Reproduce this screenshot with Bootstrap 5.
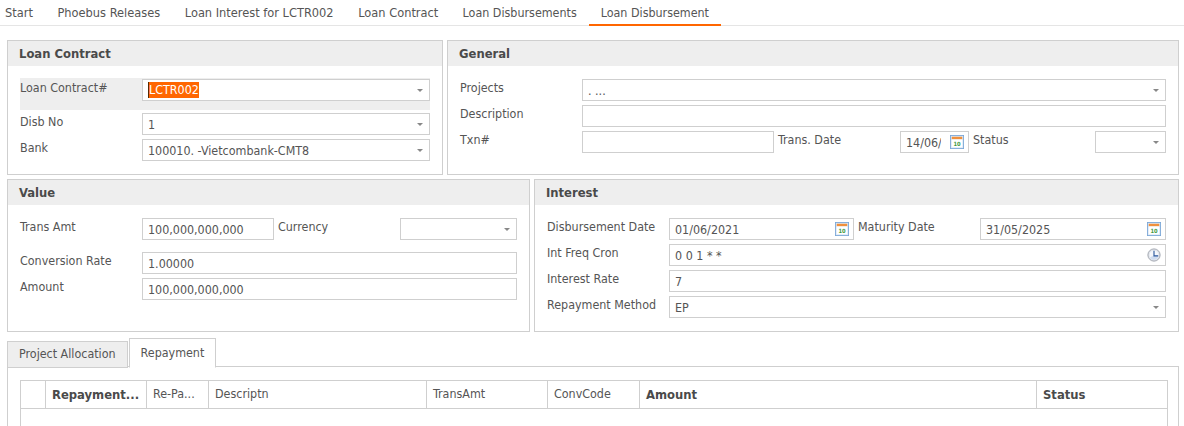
<!DOCTYPE html>
<html lang="en">
<head>
    <meta charset="UTF-8">
    <title>Loan Disbursement</title>
    <link href="https://cdn.jsdelivr.net/npm/bootstrap@5.3.0/dist/css/bootstrap.min.css" rel="stylesheet">
    <style>
        html, body { height: 426px; overflow: hidden; }
        body {
            background: #fff;
            color: #555;
            font-family: "DejaVu Sans Condensed", "DejaVu Sans", sans-serif;
            font-size: 12.4px;
        }
        /* top tabs */
        .top-tabs { height: 26px; border-bottom: 1px solid #e5e5e5; margin-bottom: 14px; padding-left: 5px; }
        .top-tabs .nav-link {
            color: #555; font-size: 12.7px; padding: 0 12.3px; height: 26px; line-height: 25px;
            border-bottom: 2px solid transparent;
        }
        .top-tabs .nav-item:first-child .nav-link { padding-left: 0; }
        .top-tabs .nav-link.tight-tab { font-size: 12.4px; padding: 0 12px; }
        .top-tabs .nav-link.active { border-bottom-color: #ff6600; }

        .page-wrap { padding: 0 5px 0 7px; }
        .panel-row { display: flex; gap: 4px; margin-bottom: 4px; }
        .panel-row.last { margin-bottom: 6px; }
        .panel-a { width: 436px; height: 135px; }
        .panel-b { flex: 1; height: 135px; }
        .panel-c { width: 523px; height: 153px; }
        .panel-d { flex: 1; height: 153px; }
        .panel-box { border: 1px solid #cfcfcf; border-radius: 0; color: #555; }
        .panel-box .card-header {
            background: #eee; border: 0; border-radius: 0; height: 25px; padding: 0 11px;
            line-height: 25px; font-weight: 700; font-size: 12.9px; color: #4a4a4a;
        }
        .panel-box .card-body { padding: 12px 12px 0; }

        /* form rows */
        .fld-row { display: flex; height: 22px; margin-bottom: 4px; }
        .fld-row.hilite { background: #eee; height: 32px; margin-bottom: 3px; padding-top: 1px; align-items: flex-start; }
        .fld-row.tall { margin-bottom: 12px; }
        .fld-row.first-row { margin-top: 1px; }
        .fld-label { flex: none; width: 122px; padding: 1px 0 0; line-height: 16px; color: #555; white-space: nowrap; }
        .fld-label.fld-gap { margin-left: 4px; }
        .fld-box { position: relative; flex: 1; min-width: 0; height: 22px; }
        .fld-box.w-132 { flex: none; width: 132px; }
        .fld-box.w-192 { flex: none; width: 192px; }
        .fld-box.w-69 { flex: none; width: 69px; }
        .fld-box.w-71 { flex: none; width: 71px; }
        .fld-box.w-117 { flex: none; width: 117px; }
        .fld-box.w-185 { flex: none; width: 185px; }
        .fld-box.w-186 { flex: none; width: 186px; }
        .fld-box .form-control, .fake-input {
            display: block; width: 100%; height: 22px; min-height: 0; border: 1px solid #cfcfcf; border-radius: 0;
            padding: 1px 5px; font-size: 12.4px; line-height: 16px; color: #555; background: #fff; box-shadow: none;
        }
        .fake-input { padding: 2px 5px 0; }
        .fld-box.with-ic .form-control { padding-right: 27px; }
        .fake-input .sel-text { background: #ff6600; color: #fff; border-left: 1px solid #5a2a00; display: inline-block; height: 16px; }
        .caret-ic {
            position: absolute; right: 7px; top: 10px; width: 0; height: 0;
            border-left: 3px solid transparent; border-right: 3px solid transparent; border-top: 3px solid #888;
        }
        .ic-over { position: absolute; right: 5px; top: 4px; width: 14px; height: 14px; display: block; }
        .ic-text { font-family: "DejaVu Sans Condensed", sans-serif; font-size: 6.5px; font-weight: 700; fill: #3f9a3f; }

        /* lower tabs */
        .sub-tabs { border-bottom: 1px solid #cfcfcf; height: 29px; align-items: flex-end; }
        .sub-tabs .nav-link {
            color: #555; font-size: 12.4px; background: #eee; border: 1px solid #cfcfcf; border-radius: 0;
            padding: 0 11px; height: 27px; line-height: 23px; margin: 0 1px -1px 0;
        }
        .sub-tabs .nav-link.active { background: #fff; height: 30px; line-height: 28px; border-bottom-color: #fff; margin-right: 0; }
        .sub-pane { border: 1px solid #cfcfcf; border-top: 0; border-bottom: 0; padding: 13px 12px 0; height: 59px; overflow: hidden; }
        .grid-tbl { table-layout: fixed; width: 1147px; margin: 0; border-collapse: collapse; }
        .grid-tbl th {
            border: 1px solid #cfcfcf; height: 28px; padding: 0 6px; font-weight: 400; font-size: 12.4px;
            color: #555; white-space: nowrap; overflow: hidden; vertical-align: middle; background: #fff;
        }
        .grid-tbl th.strong { font-weight: 700; font-size: 12.9px; color: #4a4a4a; }
        .grid-tbl td { border: 1px solid #cfcfcf; border-top: 0; border-bottom: 0; height: 18px; padding: 0; }
    </style>
</head>
<body>
    <ul class="nav top-tabs">
        <li class="nav-item"><a class="nav-link" href="#">Start</a></li>
        <li class="nav-item"><a class="nav-link" href="#">Phoebus Releases</a></li>
        <li class="nav-item"><a class="nav-link" href="#">Loan Interest for LCTR002</a></li>
        <li class="nav-item"><a class="nav-link" href="#">Loan Contract</a></li>
        <li class="nav-item"><a class="nav-link tight-tab" href="#">Loan Disbursements</a></li>
        <li class="nav-item"><a class="nav-link tight-tab active" href="#">Loan Disbursement</a></li>
    </ul>

    <div class="page-wrap">
        <div class="panel-row">
            <div class="card panel-box panel-a">
                <div class="card-header">Loan Contract</div>
                <div class="card-body">
                    <div class="fld-row hilite">
                        <div class="fld-label">Loan Contract#</div>
                        <div class="fld-box"><div class="fake-input"><span class="sel-text">LCTR002</span></div><span class="caret-ic"></span></div>
                    </div>
                    <div class="fld-row">
                        <div class="fld-label">Disb No</div>
                        <div class="fld-box"><input class="form-control" value="1"><span class="caret-ic"></span></div>
                    </div>
                    <div class="fld-row">
                        <div class="fld-label">Bank</div>
                        <div class="fld-box"><input class="form-control" value="100010. -Vietcombank-CMT8"><span class="caret-ic"></span></div>
                    </div>
                </div>
            </div>
            <div class="card panel-box panel-b">
                <div class="card-header">General</div>
                <div class="card-body">
                    <div class="fld-row first-row">
                        <div class="fld-label">Projects</div>
                        <div class="fld-box"><input class="form-control" value=". ..."><span class="caret-ic"></span></div>
                    </div>
                    <div class="fld-row">
                        <div class="fld-label">Description</div>
                        <div class="fld-box"><input class="form-control"></div>
                    </div>
                    <div class="fld-row">
                        <div class="fld-label">Txn#</div>
                        <div class="fld-box w-192"><input class="form-control"></div>
                        <div class="fld-label fld-gap">Trans. Date</div>
                        <div class="fld-box w-69 with-ic"><input class="form-control" value="14/06/2021">
                            <svg class="ic-over" viewBox="0 0 16 16"><use href="#ic-cal"/></svg></div>
                        <div class="fld-label fld-gap">Status</div>
                        <div class="fld-box w-71"><input class="form-control"><span class="caret-ic"></span></div>
                    </div>
                </div>
            </div>
        </div>

        <div class="panel-row last">
            <div class="card panel-box panel-c">
                <div class="card-header">Value</div>
                <div class="card-body">
                    <div class="fld-row tall first-row">
                        <div class="fld-label">Trans Amt</div>
                        <div class="fld-box w-132"><input class="form-control" value="100,000,000,000"></div>
                        <div class="fld-label fld-gap">Currency</div>
                        <div class="fld-box w-117"><input class="form-control"><span class="caret-ic"></span></div>
                    </div>
                    <div class="fld-row">
                        <div class="fld-label">Conversion Rate</div>
                        <div class="fld-box"><input class="form-control" value="1.00000"></div>
                    </div>
                    <div class="fld-row">
                        <div class="fld-label">Amount</div>
                        <div class="fld-box"><input class="form-control" value="100,000,000,000"></div>
                    </div>
                </div>
            </div>
            <div class="card panel-box panel-d">
                <div class="card-header">Interest</div>
                <div class="card-body">
                    <div class="fld-row first-row">
                        <div class="fld-label">Disbursement Date</div>
                        <div class="fld-box w-185 with-ic"><input class="form-control" value="01/06/2021">
                            <svg class="ic-over" viewBox="0 0 16 16"><use href="#ic-cal"/></svg></div>
                        <div class="fld-label fld-gap">Maturity Date</div>
                        <div class="fld-box w-186 with-ic"><input class="form-control" value="31/05/2025">
                            <svg class="ic-over" viewBox="0 0 16 16"><use href="#ic-cal"/></svg></div>
                    </div>
                    <div class="fld-row">
                        <div class="fld-label">Int Freq Cron</div>
                        <div class="fld-box with-ic"><input class="form-control" value="0 0 1 * *">
                            <svg class="ic-over" viewBox="0 0 16 16">
                                <circle cx="8" cy="8" r="7" fill="#dfe3ea" stroke="#9a9fa8"/>
                                <circle cx="8" cy="8" r="5.2" fill="#f5f7fb"/>
                                <path d="M8 8.5H13A5 5 0 0 1 3.5 10.5L8 8.5Z" fill="#cfdcf0"/>
                                <path d="M8 3.2V9H12.8" fill="none" stroke="#2f5a9e" stroke-width="1.3"/>
                            </svg></div>
                    </div>
                    <div class="fld-row">
                        <div class="fld-label">Interest Rate</div>
                        <div class="fld-box"><input class="form-control" value="7"></div>
                    </div>
                    <div class="fld-row">
                        <div class="fld-label">Repayment Method</div>
                        <div class="fld-box"><input class="form-control" value="EP"><span class="caret-ic"></span></div>
                    </div>
                </div>
            </div>
        </div>

        <ul class="nav sub-tabs">
            <li class="nav-item"><a class="nav-link" href="#">Project Allocation</a></li>
            <li class="nav-item"><a class="nav-link active" href="#">Repayment</a></li>
        </ul>
        <div class="sub-pane">
            <table class="grid-tbl">
                <colgroup>
                    <col style="width:25px"><col style="width:101px"><col style="width:62px"><col style="width:218px">
                    <col style="width:121px"><col style="width:92px"><col style="width:397px"><col style="width:131px">
                </colgroup>
                <thead>
                    <tr>
                        <th></th>
                        <th class="strong">Repayment...</th>
                        <th>Re-Pa...</th>
                        <th>Descriptn</th>
                        <th>TransAmt</th>
                        <th>ConvCode</th>
                        <th class="strong">Amount</th>
                        <th class="strong">Status</th>
                    </tr>
                </thead>
                <tbody><tr><td colspan="8"></td></tr></tbody>
            </table>
        </div>
    </div>

    <svg width="0" height="0" class="d-none">
        <symbol id="ic-cal" viewBox="0 0 16 16">
            <rect x="0.5" y="0.5" width="15" height="15" fill="#dce9f6" stroke="#7aa6d6"/>
            <rect x="2" y="2" width="12" height="3" fill="#f0903c"/>
            <rect x="2" y="5" width="12" height="9" fill="#fff"/>
            <text x="8" y="12.5" text-anchor="middle" class="ic-text">10</text>
        </symbol>
    </svg>
    <script src="https://cdn.jsdelivr.net/npm/bootstrap@5.3.0/dist/js/bootstrap.bundle.min.js"></script>
</body>
</html>
